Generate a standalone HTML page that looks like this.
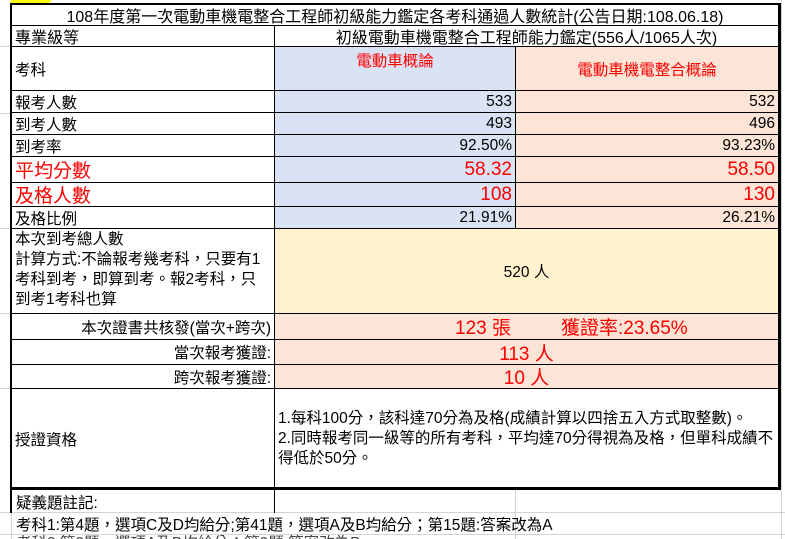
<!DOCTYPE html>
<html><head><meta charset="utf-8"><style>
*{margin:0;padding:0;box-sizing:border-box}
body{width:785px;height:539px;overflow:hidden;background:#fff;position:relative;font-family:"Liberation Sans","Noto Sans CJK TC",sans-serif;font-size:15.5px;color:#000}
.c{position:absolute;border-right:1px solid #000;border-bottom:1px solid #000;overflow:hidden;white-space:nowrap;display:flex;align-items:center;padding:0 3px}
.r{justify-content:flex-end}
.m{justify-content:center}
.b{background:#dae3f3}.p{background:#fce4d6}.y{background:#fff2cc}
.red{color:#f00}
.g{position:absolute;background:#d4d4d4}
.big{font-size:19px}
</style></head><body>
<div class="g" style="left:0;top:512px;width:785px;height:1px"></div>
<div class="g" style="left:0;top:534px;width:785px;height:1px"></div>
<div class="g" style="left:11px;top:512px;width:1px;height:27px"></div>
<div class="g" style="left:781px;top:0;width:1px;height:539px"></div>
<div class="g" style="left:515px;top:490px;width:1px;height:49px"></div>
<div class="g" style="left:0;top:46px;width:11px;height:1px"></div>
<div class="g" style="left:0;top:113px;width:11px;height:1px"></div>
<div class="g" style="left:0;top:228px;width:11px;height:1px"></div>
<div class="g" style="left:0;top:313px;width:11px;height:1px"></div>
<div class="g" style="left:0;top:388px;width:11px;height:1px"></div>
<div style="position:absolute;left:11px;top:0;width:40px;height:4px;background:#ffff00"></div>
<div style="position:absolute;left:10px;top:3px;width:771px;height:487px;border:2px solid #000;border-bottom:3px solid #000"></div>
<div style="position:absolute;left:10px;top:488px;width:2px;height:25px;background:#000"></div>
<div style="position:absolute;left:274px;top:488px;width:1px;height:25px;background:#000"></div>

<div class="c m" style="left:12px;top:5px;width:767px;height:21px;font-size:16px">108年度第一次電動車機電整合工程師初級能力鑑定各考科通過人數統計(公告日期:108.06.18)</div>
<div class="c" style="left:12px;top:26px;width:263px;height:21px;font-size:16px">專業級等</div>
<div class="c m" style="left:275px;top:26px;width:504px;height:21px;font-size:16px">初級電動車機電整合工程師能力鑑定(556人/1065人次)</div>

<div class="c" style="left:12px;top:47px;width:263px;height:44px">考科</div>
<div class="c b m red" style="left:275px;top:47px;width:241px;height:44px;align-items:flex-start;padding-top:2px">電動車概論</div>
<div class="c p m red" style="left:516px;top:47px;width:263px;height:44px">電動車機電整合概論</div>

<div class="c" style="left:12px;top:91px;width:263px;height:22px">報考人數</div>
<div class="c b r" style="left:275px;top:91px;width:241px;height:22px">533</div>
<div class="c p r" style="left:516px;top:91px;width:263px;height:22px">532</div>

<div class="c" style="left:12px;top:113px;width:263px;height:22px">到考人數</div>
<div class="c b r" style="left:275px;top:113px;width:241px;height:22px">493</div>
<div class="c p r" style="left:516px;top:113px;width:263px;height:22px">496</div>

<div class="c" style="left:12px;top:135px;width:263px;height:22px">到考率</div>
<div class="c b r" style="left:275px;top:135px;width:241px;height:22px">92.50%</div>
<div class="c p r" style="left:516px;top:135px;width:263px;height:22px">93.23%</div>

<div class="c red big" style="left:12px;top:157px;width:263px;height:26px">平均分數</div>
<div class="c b r red big" style="left:275px;top:157px;width:241px;height:26px">58.32</div>
<div class="c p r red big" style="left:516px;top:157px;width:263px;height:26px">58.50</div>

<div class="c red big" style="left:12px;top:183px;width:263px;height:24px">及格人數</div>
<div class="c b r red big" style="left:275px;top:183px;width:241px;height:24px">108</div>
<div class="c p r red big" style="left:516px;top:183px;width:263px;height:24px">130</div>

<div class="c" style="left:12px;top:207px;width:263px;height:22px">及格比例</div>
<div class="c b r" style="left:275px;top:207px;width:241px;height:22px">21.91%</div>
<div class="c p r" style="left:516px;top:207px;width:263px;height:22px">26.21%</div>

<div class="c" style="left:12px;top:229px;width:263px;height:85px;white-space:normal;line-height:20px;align-items:flex-start;padding-top:1px">本次到考總人數<br>計算方式:不論報考幾考科，只要有1考科到考，即算到考。報2考科，只到考1考科也算</div>
<div class="c y m" style="left:275px;top:229px;width:504px;height:85px">520 人</div>

<div class="c r" style="left:12px;top:314px;width:263px;height:26px">本次證書共核發(當次+跨次)</div>
<div class="c p red big" style="left:275px;top:314px;width:504px;height:26px;padding-left:180px">123 張<span style="margin-left:50px">獲證率:23.65%</span></div>

<div class="c r" style="left:12px;top:340px;width:263px;height:25px">當次報考獲證:</div>
<div class="c p m red big" style="left:275px;top:340px;width:504px;height:25px">113 人</div>

<div class="c r" style="left:12px;top:365px;width:263px;height:24px">跨次報考獲證:</div>
<div class="c p m red big" style="left:275px;top:365px;width:504px;height:24px">10 人</div>

<div class="c" style="left:12px;top:389px;width:263px;height:100px;border-bottom:none">授證資格</div>
<div class="c" style="left:275px;top:389px;width:504px;height:100px;border-bottom:none;white-space:normal;line-height:20px">1.每科100分，該科達70分為及格(成績計算以四捨五入方式取整數)。<br>2.同時報考同一級等的所有考科，平均達70分得視為及格，但單科成績不得低於50分。</div>

<div style="position:absolute;left:16px;top:491px">疑義題註記:</div>
<div style="position:absolute;left:16px;top:513px;white-space:nowrap">考科1:第4題，選項C及D均給分;第41題，選項A及B均給分；第15題:答案改為A</div>
<div style="position:absolute;left:16px;top:534px;white-space:nowrap;height:5px;overflow:hidden;line-height:20px;color:#444">考科2:第2題，選項A及B均給分；第9題:答案改為B</div>
</body></html>
